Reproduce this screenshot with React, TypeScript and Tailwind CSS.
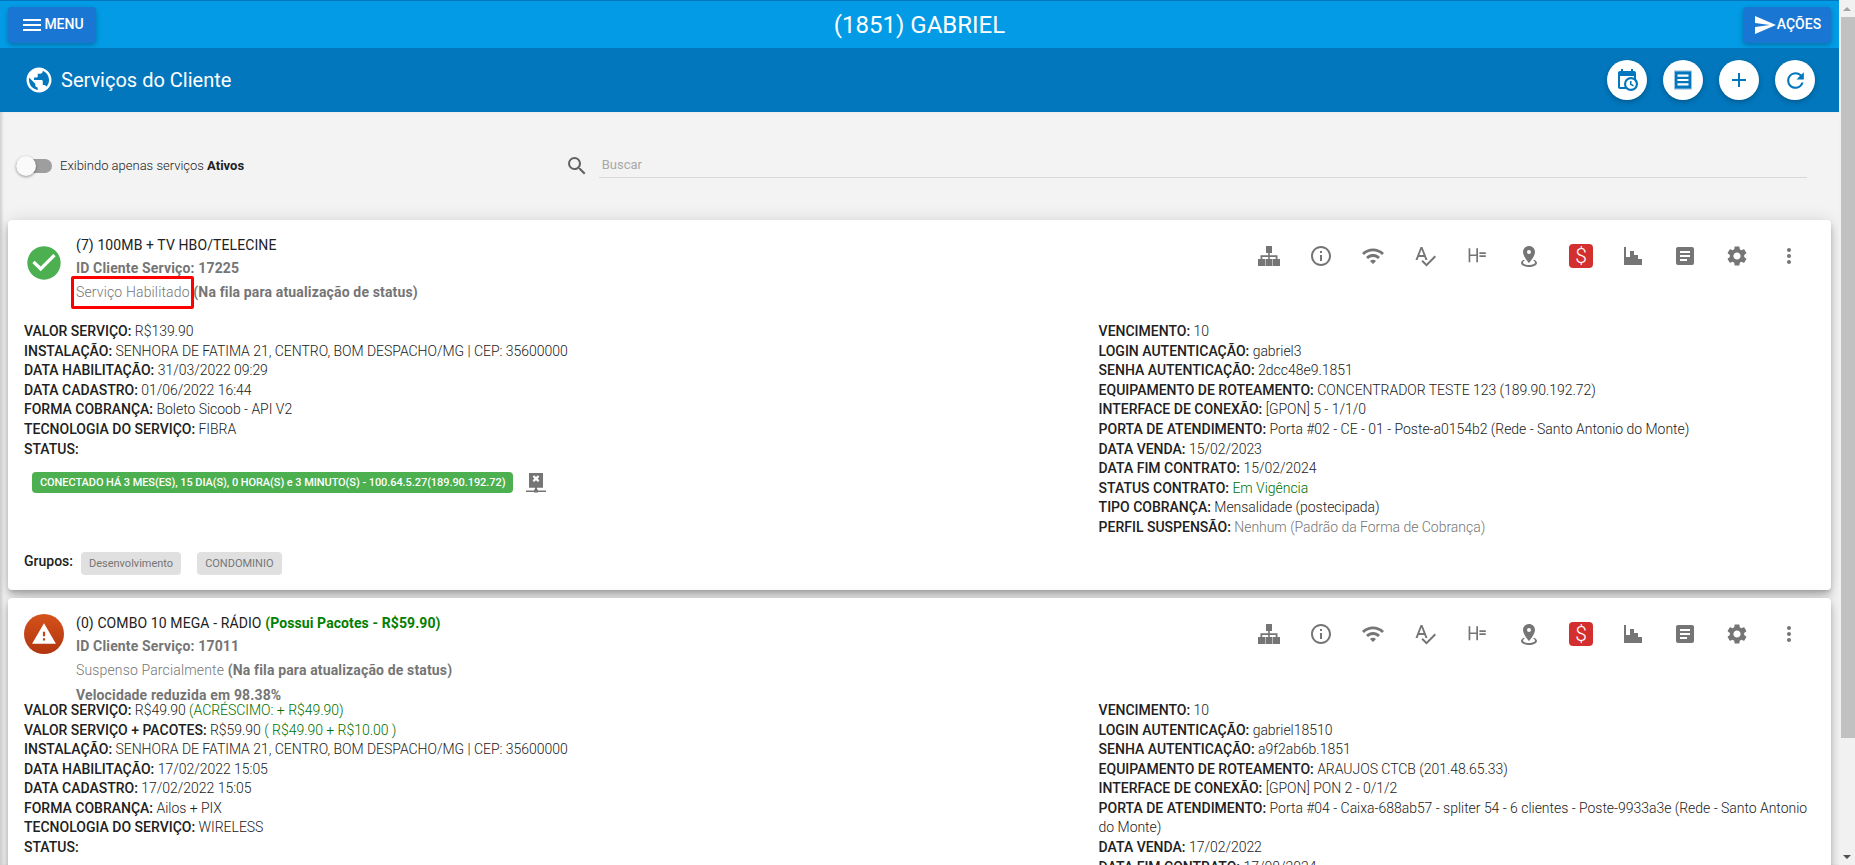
import React from "react";
import {
  MdMenu, MdSend, MdCheckCircle, MdWarning, MdInfoOutline, MdWifi, MdSpellcheck,
  MdSettings, MdMoreVert, MdAdd, MdRefresh, MdSearch, MdPublic,
} from "react-icons/md";

const P = ({ d, className = "" }: { d: string; className?: string }) => (
  <svg viewBox="0 0 24 24" width="24" height="24" fill="currentColor" className={className}>
    <path d={d} />
  </svg>
);

const paths = {
  sitemap: "M9 2h6v7h-2.2v2.2h7.7v3.8H23v7h-7v-7h2.7v-2h-5.9v2h2.7v7h-7v-7h2.7v-2H5.3v2H8v7H1v-7h2.5v-3.8h7.7V9H9z",
  headerEq: "M3.6 4.3h1.7v6.2h6V4.3H13v14h-1.7v-6.2h-6v6.2H3.6zM14.4 8.2h6.4v1.7h-6.4zM14.4 11.2h6.4v1.7h-6.4z",
  marker: "M12,2C15.31,2 18,4.66 18,7.95C18,12.41 12,19 12,19C12,19 6,12.41 6,7.95C6,4.66 8.69,2 12,2M12,6A2,2 0 0,0 10,8A2,2 0 0,0 12,10A2,2 0 0,0 14,8A2,2 0 0,0 12,6M20,19C20,21.21 16.42,23 12,23C7.58,23 4,21.21 4,19C4,17.71 5.22,16.56 7.11,15.83L7.75,16.74C6.67,17.19 6,17.81 6,18.5C6,19.88 8.69,21 12,21C15.31,21 18,19.88 18,18.5C18,17.81 17.33,17.19 16.25,16.74L16.89,15.83C18.78,16.56 20,17.71 20,19Z",
  histogram: "M3,3H5V13H9V7H13V11H17V15H21V21H3V3Z",
  doc: "M14,17H7V15H14M17,13H7V11H17M17,9H7V7H17M19,3H5C3.89,3 3,3.89 3,5V19A2,2 0 0,0 5,21H19A2,2 0 0,0 21,19V5C21,3.89 20.1,3 19,3Z",
  calendar: "M15,13H16.5V15.82L18.94,17.23L18.19,18.53L15,16.69V13M19,8H5V19H9.67C9.24,18.09 9,17.07 9,16A7,7 0 0,1 16,9C17.07,9 18.09,9.24 19,9.67V8M5,21C3.89,21 3,20.1 3,19V5C3,3.89 3.89,3 5,3H6V1H8V3H16V1H18V3H19A2,2 0 0,1 21,5V11.1C22.24,12.36 23,14.09 23,16A7,7 0 0,1 16,23C14.09,23 12.36,22.24 11.1,21H5M16,11.15A4.85,4.85 0 0,0 11.15,16C11.15,18.68 13.32,20.85 16,20.85A4.85,4.85 0 0,0 20.85,16C20.85,13.32 18.68,11.15 16,11.15Z",
};

const Fab = ({ children }: { children: React.ReactNode }) => (
  <button className="w-10 h-10 rounded-full bg-white text-[#0277bd] flex items-center justify-center shadow-[0_2px_5px_rgba(0,0,0,0.26)]">
    {children}
  </button>
);

const Slot = ({ children }: { children: React.ReactNode }) => (
  <div className="w-[52px] h-6 flex items-center justify-center text-[#757575]">{children}</div>
);

const ActionIcons = () => (
  <div className="flex mt-2 ml-auto">
    <Slot><P d={paths.sitemap} /></Slot>
    <Slot><MdInfoOutline size={24} /></Slot>
    <Slot><MdWifi size={24} /></Slot>
    <Slot><MdSpellcheck size={24} /></Slot>
    <Slot><P d={paths.headerEq} /></Slot>
    <Slot><P d={paths.marker} /></Slot>
    <Slot>
      <span className="w-6 h-6 rounded bg-[#d32f2f] text-white text-[21px] leading-6 text-center font-light">$</span>
    </Slot>
    <Slot><P d={paths.histogram} /></Slot>
    <Slot><P d={paths.doc} /></Slot>
    <Slot><MdSettings size={24} /></Slot>
    <Slot><MdMoreVert size={24} /></Slot>
  </div>
);

const Row = ({ label, children }: { label: string; children?: React.ReactNode }) => (
  <div>
    <span className="font-medium text-[#212121]">{label}</span>
    {children ? <span className="text-[#212121] font-light tracking-[-0.03px]"> {children}</span> : null}
  </div>
);

const Green = ({ children }: { children: React.ReactNode }) => <span className="text-[#007000]">{children}</span>;

const Card = ({ children, last }: { children: React.ReactNode; last?: boolean }) => (
  <section className={`flex-none bg-white rounded px-4 pt-4 ${last ? "pb-4" : "pb-[15.4px]"} shadow-[0_3px_5px_-1px_rgba(0,0,0,0.2),0_6px_10px_rgba(0,0,0,0.14),0_1px_18px_rgba(0,0,0,0.12)]`}>
    {children}
  </section>
);

const ServiceOne = () => (
  <Card>
    <div className="flex h-[86px]">
      <div className="w-10 h-10 mt-[7px] flex-none text-[#4caf50]"><MdCheckCircle size={40} /></div>
      <div className="ml-3">
        <div className="text-[#212121] tracking-[0.1px]">(7) 100MB + TV HBO/TELECINE</div>
        <div className="mt-[3px] font-bold text-[#757575] tracking-[0.15px]">ID Cliente Serviço: 17225</div>
        <div className="mt-[5px] text-[#757575] tracking-[0.15px]">
          <span className="relative font-light">
            Serviço Habilitado
            <span className="absolute left-[-5px] right-[-4px] top-[-8px] bottom-[-9px] border-[3px] border-[#ff0000] rounded-[2px]" />
          </span>{" "}
          <span className="font-bold">(Na fila para atualização de status)</span>
        </div>
      </div>
      <ActionIcons />
    </div>
    <div className="flex">
      <div className="w-[60%]">
        <Row label="VALOR SERVIÇO:">R$139.90</Row>
        <Row label="INSTALAÇÃO:">SENHORA DE FATIMA 21, CENTRO, BOM DESPACHO/MG | CEP: 35600000</Row>
        <Row label="DATA HABILITAÇÃO:">31/03/2022 09:29</Row>
        <Row label="DATA CADASTRO:">01/06/2022 16:44</Row>
        <Row label="FORMA COBRANÇA:">Boleto Sicoob - API V2</Row>
        <Row label="TECNOLOGIA DO SERVIÇO:">FIBRA</Row>
        <Row label="STATUS:" />
        <div className="flex items-center mt-[11px] ml-2">
          <span className="h-[21px] px-2 rounded bg-[#4caf50] text-white text-[11px] font-medium tracking-[-0.07px] leading-[21px] whitespace-nowrap">
            CONECTADO HÁ 3 MES(ES), 15 DIA(S), 0 HORA(S) e 3 MINUTO(S) - 100.64.5.27(189.90.192.72)
          </span>
          <svg viewBox="0 0 24 24" width="24" height="24" className="ml-[11px] text-[#757575]" fill="currentColor">
            <path d="M5 3h14v14.7H5zM11 17h2v3h-2zM2 20.5h8v-1h4v1h8V22h-8v.6h-4V22H2z" />
            <path d="M8.6 6.8l1.6-1.6L12 7l1.8-1.8 1.6 1.6L13.6 8.6l1.8 1.8-1.6 1.6L12 10.2 10.2 12l-1.6-1.6 1.8-1.8z" fill="#fff" />
          </svg>
        </div>
      </div>
      <div className="w-[40%]">
        <Row label="VENCIMENTO:">10</Row>
        <Row label="LOGIN AUTENTICAÇÃO:">gabriel3</Row>
        <Row label="SENHA AUTENTICAÇÃO:">2dcc48e9.1851</Row>
        <Row label="EQUIPAMENTO DE ROTEAMENTO:">CONCENTRADOR TESTE 123 (189.90.192.72)</Row>
        <Row label="INTERFACE DE CONEXÃO:">[GPON] 5 - 1/1/0</Row>
        <Row label="PORTA DE ATENDIMENTO:">Porta #02 - CE - 01 - Poste-a0154b2 (Rede - Santo Antonio do Monte)</Row>
        <Row label="DATA VENDA:">15/02/2023</Row>
        <Row label="DATA FIM CONTRATO:">15/02/2024</Row>
        <Row label="STATUS CONTRATO:"><Green>Em Vigência</Green></Row>
        <Row label="TIPO COBRANÇA:">Mensalidade (postecipada)</Row>
        <Row label="PERFIL SUSPENSÃO:"><span className="text-[#757575]">Nenhum (Padrão da Forma de Cobrança)</span></Row>
      </div>
    </div>
    <div className="flex items-start mt-[14px]">
      <span className="-mt-px font-medium text-[#212121] leading-5">Grupos:</span>
      <span className="ml-2 h-[23px] px-2 rounded bg-[#e0e0e0] text-[#757575] text-[11px] leading-[23px]">Desenvolvimento</span>
      <span className="ml-4 h-[23px] px-2 rounded bg-[#e0e0e0] text-[#757575] text-[11px] leading-[23px]">CONDOMINIO</span>
    </div>
  </Card>
);

const ServiceTwo = () => (
  <Card last>
    <div className="flex h-[87px]">
      <div className="w-10 h-10 flex-none rounded-full bg-gradient-to-b from-[#d5521b] to-[#b1350f] flex items-center justify-center text-white">
        <MdWarning size={26} />
      </div>
      <div className="ml-3">
        <div className="text-[#212121] tracking-[0.1px]">(0) COMBO 10 MEGA - RÁDIO <span className="font-bold text-[#008000]">(Possui Pacotes - R$59.90)</span></div>
        <div className="mt-[3px] font-bold text-[#757575] tracking-[0.15px]">ID Cliente Serviço: 17011</div>
        <div className="mt-[5px] text-[#757575] tracking-[0.15px]">
          <span className="font-light">Suspenso Parcialmente</span> <span className="font-bold">(Na fila para atualização de status)</span>
        </div>
        <div className="mt-[5px] font-bold text-[#757575] tracking-[0.15px]">Velocidade reduzida em 98.38%</div>
      </div>
      <ActionIcons />
    </div>
    <div className="flex">
      <div className="w-[60%]">
        <Row label="VALOR SERVIÇO:">R$49.90 <Green>(ACRÉSCIMO: + R$49.90)</Green></Row>
        <Row label="VALOR SERVIÇO + PACOTES:">R$59.90 <Green>( R$49.90 + R$10.00 )</Green></Row>
        <Row label="INSTALAÇÃO:">SENHORA DE FATIMA 21, CENTRO, BOM DESPACHO/MG | CEP: 35600000</Row>
        <Row label="DATA HABILITAÇÃO:">17/02/2022 15:05</Row>
        <Row label="DATA CADASTRO:">17/02/2022 15:05</Row>
        <Row label="FORMA COBRANÇA:">Ailos + PIX</Row>
        <Row label="TECNOLOGIA DO SERVIÇO:">WIRELESS</Row>
        <Row label="STATUS:" />
      </div>
      <div className="w-[40%]">
        <Row label="VENCIMENTO:">10</Row>
        <Row label="LOGIN AUTENTICAÇÃO:">gabriel18510</Row>
        <Row label="SENHA AUTENTICAÇÃO:">a9f2ab6b.1851</Row>
        <Row label="EQUIPAMENTO DE ROTEAMENTO:">ARAUJOS CTCB (201.48.65.33)</Row>
        <Row label="INTERFACE DE CONEXÃO:">[GPON] PON 2 - 0/1/2</Row>
        <Row label="PORTA DE ATENDIMENTO:">Porta #04 - Caixa-688ab57 - spliter 54 - 6 clientes - Poste-9933a3e (Rede - Santo Antonio do Monte)</Row>
        <Row label="DATA VENDA:">17/02/2022</Row>
        <Row label="DATA FIM CONTRATO:">17/08/2024</Row>
      </div>
    </div>
  </Card>
);

const Scrollbar = () => (
  <div className="w-4 flex-none h-full bg-[#f1f1f1] flex flex-col">
    <div className="h-[17px] flex items-center justify-center">
      <span className="w-0 h-0 border-x-[4px] border-x-transparent border-b-[4px] border-b-[#a3a3a3]" />
    </div>
    <div className="h-[721px] ml-[2px] bg-[#c1c1c1]" />
    <div className="mt-auto h-[17px] flex items-center justify-center">
      <span className="w-0 h-0 border-x-[4px] border-x-transparent border-t-[4px] border-t-[#505050]" />
    </div>
  </div>
);

export default function App() {
  return (
    <div className="h-[865px] w-[1855px] flex overflow-hidden bg-[#f3f3f3] font-['Roboto',sans-serif] text-sm leading-[1.4]">
      <div className="flex-1 min-w-0 h-full overflow-hidden flex flex-col">
        <header className="flex-none h-12 bg-[#039be5] border-t border-[#0277bd] flex items-center justify-between pl-2 pr-2">
          <button className="w-[88px] h-9 rounded bg-[#1976d2] text-white font-medium flex items-center justify-center shadow-[0_2px_5px_rgba(0,0,0,0.26)]">
            <MdMenu size={24} />
            <span>MENU</span>
          </button>
          <h1 className="text-white text-2xl font-normal">(1851) GABRIEL</h1>
          <button className="w-[88px] h-9 rounded bg-[#1976d2] text-white font-medium flex items-center justify-center shadow-[0_2px_5px_rgba(0,0,0,0.26)]">
            <MdSend size={24} />
            <span>AÇÕES</span>
          </button>
        </header>
        <div className="flex-none h-16 bg-[#0277bd] flex items-center pl-6 pr-6">
          <MdPublic size={30} className="text-white" />
          <h2 className="ml-[7px] text-white text-xl font-normal">Serviços do Cliente</h2>
          <div className="ml-auto flex gap-4">
            <Fab><P d={paths.calendar} /></Fab>
            <Fab>
              <svg viewBox="0 0 24 24" width="24" height="24">
                <rect x="3.6" y="3.4" width="16.8" height="17.2" fill="currentColor" />
                <path d="M3.6 3h16.8M3.6 21h16.8" stroke="currentColor" strokeWidth="1" strokeDasharray="1 1" fill="none" />
                <path d="M6.5 6.6h11v2.2h-11zM6.5 10.9h11v2.2h-11zM6.5 15.2h11v2.2h-11z" fill="#fff" />
              </svg>
            </Fab>
            <Fab><MdAdd size={24} /></Fab>
            <Fab><MdRefresh size={25} /></Fab>
          </div>
        </div>
        <div className="flex-1 min-h-0 flex flex-col shadow-[inset_3px_0_3px_-1px_rgba(0,0,0,0.15)]">
          <div className="flex-none h-[108px] flex items-center">
            <div className="w-[30%] flex items-center pl-4">
              <span className="relative w-[36px] h-[14px] rounded-full bg-[#9e9e9e]">
                <span className="absolute left-0 top-[-3px] w-5 h-5 rounded-full bg-[#fafafa] shadow-[0_1px_3px_rgba(0,0,0,0.4)]" />
              </span>
              <span className="ml-2 text-[13px] font-light text-[#212121]">Exibindo apenas serviços <b className="font-bold">Ativos</b></span>
            </div>
            <div className="flex-1 flex items-center pl-[13px] pr-8">
              <MdSearch size={24} className="text-[#616161]" />
              <div className="ml-[10px] flex-1 h-6 border-b border-[#d8d8d8] pl-[3px] pt-[1px] text-[13px] leading-5 text-[#a8a8a8]">Buscar</div>
            </div>
          </div>
          <main className="flex-1 min-h-0 px-2 flex flex-col gap-2">
            <ServiceOne />
            <ServiceTwo />
          </main>
        </div>
      </div>
      <Scrollbar />
    </div>
  );
}
